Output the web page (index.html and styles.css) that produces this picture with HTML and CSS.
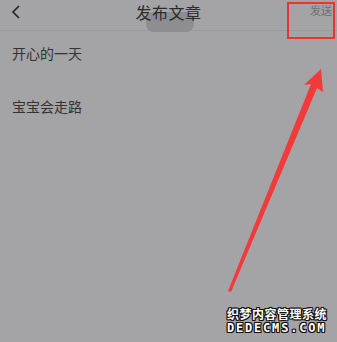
FILE: index.html
```html
<!DOCTYPE html>
<html lang="zh">
<head>
<meta charset="utf-8">
<link rel="stylesheet" href="styles.css">
</head>
<body>
<div class="screen">
  <header class="topbar">
    <svg class="back" width="10" height="14" viewBox="0 0 10 14"><path d="M8 1 L2 7 L8 13" fill="none" stroke="#222" stroke-width="1.6"/></svg>
    <div class="blob"></div>
    <h1 class="title">发布文章</h1>
    <span class="send">发送</span>
    <div class="redbox"></div>
  </header>
  <ul class="list">
    <li>开心的一天</li>
    <li>宝宝会走路</li>
  </ul>
  <svg class="arrow" width="337" height="342" viewBox="0 0 337 342">
    <path d="M321 69 L323 92 L317 88 L231 292 L228 291 L311 84 L304 85 Z" fill="#f23a3a"/>
  </svg>
  <div class="mark">
    <div class="mark-cn">织梦内容管理系统</div>
    <div class="mark-en">DEDECMS.COM</div>
  </div>
</div>
</body>
</html>
```
FILE: styles.css
```css
html, body { margin: 0; padding: 0; }
body { font-family: "Noto Sans CJK SC", "Noto Sans", sans-serif; }
.screen {
  position: relative;
  width: 337px;
  height: 342px;
  background: #a4a3a5;
  overflow: hidden;
}
.topbar {
  position: relative;
  height: 30px;
  border-bottom: 1px solid #9b9a9c;
  display: flex;
  align-items: center;
  justify-content: center;
}
.back { position: absolute; left: 11px; top: 5px; }
.blob {
  position: absolute;
  left: 146px;
  top: 12px;
  width: 48px;
  height: 20px;
  background: #8e8d8f;
  border-radius: 8px;
}
.title {
  position: relative;
  margin: 0;
  font-size: 16px;
  font-weight: normal;
  color: #2c2c2c;
  line-height: 20px;
  margin-top: -7px;
  letter-spacing: 0.5px;
}
.send {
  position: absolute;
  right: 5px;
  top: 3px;
  font-size: 11px;
  color: #6f6e71;
  line-height: 14px;
}
.redbox {
  position: absolute;
  left: 287px;
  top: 2px;
  width: 44px;
  height: 33px;
  border: 2px solid #ea3434;
}
.list { list-style: none; margin: 0; padding: 0 12px; }
.list li {
  font-size: 14px;
  color: #333;
  line-height: 20px;
}
.list li:first-child { margin-top: 12px; }
.list li + li { margin-top: 33px; }
.arrow { position: absolute; left: 0; top: 0; }
.mark {
  position: absolute;
  left: 227px;
  top: 306px;
  color: #fff;
  text-shadow: 1px 0 0 #111, -1px 0 0 #111, 0 1px 0 #111, 0 -1px 0 #111, 1px 1px 0 #111, -1px -1px 0 #111, 1px -1px 0 #111, -1px 1px 0 #111;
  font-weight: bold;
}
.mark-cn { font-size: 12px; line-height: 15px; letter-spacing: 0.5px; }
.mark-en { font-family: "DejaVu Sans Mono", monospace; font-size: 12px; line-height: 14px; letter-spacing: 1.8px; }
```
